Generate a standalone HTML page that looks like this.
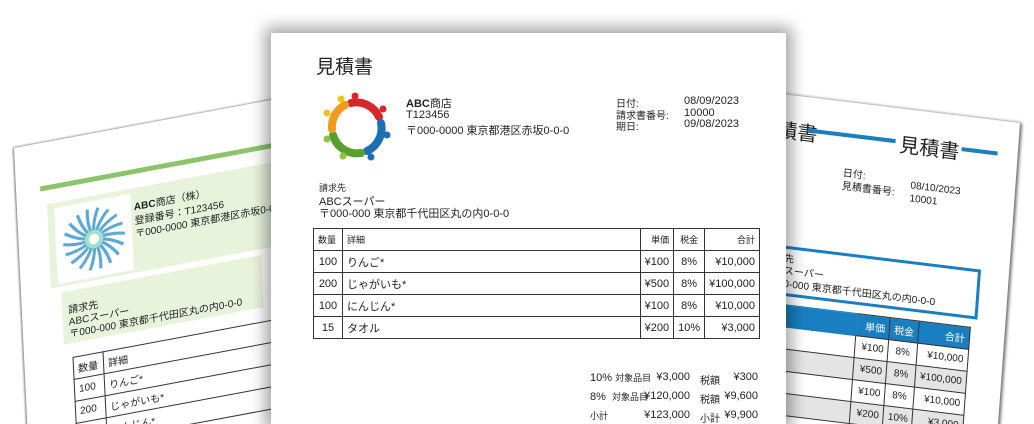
<!DOCTYPE html>
<html style="width:1034px;height:424px;overflow:hidden"><head><meta charset="utf-8"><style>
*{margin:0;padding:0;box-sizing:border-box}
html,body{overflow:hidden}
body{width:1034px;height:424px;overflow:hidden;background:#fff;font-family:"Liberation Sans","Noto Sans CJK JP",sans-serif;color:#222}
#wrap{position:relative;width:1034px;height:424px;overflow:hidden}
.abs{position:absolute}
.pg{position:absolute;background:#fff}
#left{left:14px;top:148px;width:330px;height:400px;transform-origin:0 0;transform:matrix(1,-0.187,0.048,1,0,0);box-shadow:-1px 0 2px #777,0 -1px 2px #ccc}
#right{left:720px;top:123px;width:300px;height:400px;transform-origin:300px 0;transform:matrix(1,0.122,-0.073,1,0,0);box-shadow:2px 0 3px #666}
#center{left:271px;top:33px;width:515px;height:391px;box-shadow:0 0 14px 6px rgba(0,0,0,.35)}
.t{font-size:11px;white-space:nowrap;position:absolute}
table{border-collapse:collapse;position:absolute;font-size:10px}
td{border:1px solid #333;height:22px;padding:0 4px;white-space:nowrap}
</style></head><body><div id="wrap">

<div class="pg" id="left">
  <div class="abs" style="left:24px;top:43px;width:320px;height:5px;background:#8cc46a"></div>
  <div class="abs" style="left:30px;top:62px;width:310px;height:84px;background:#e8f3dc"></div>
  <div class="abs" style="left:37px;top:67px;width:76px;height:76px;background:#fff">
    <svg width="76" height="76" viewBox="0 0 74 72"><g transform="translate(37,36)" fill="none" stroke-width="3">
    <g stroke="#5aa9d6">
    <path d="M3,0 Q14,-4 30,0"/><path d="M3,0 Q14,-4 30,0" transform="rotate(20)"/><path d="M3,0 Q14,-4 30,0" transform="rotate(40)"/><path d="M3,0 Q14,-4 30,0" transform="rotate(60)"/><path d="M3,0 Q14,-4 30,0" transform="rotate(80)"/><path d="M3,0 Q14,-4 30,0" transform="rotate(100)"/><path d="M3,0 Q14,-4 30,0" transform="rotate(120)"/><path d="M3,0 Q14,-4 30,0" transform="rotate(140)"/><path d="M3,0 Q14,-4 30,0" transform="rotate(160)"/><path d="M3,0 Q14,-4 30,0" transform="rotate(180)"/><path d="M3,0 Q14,-4 30,0" transform="rotate(200)"/><path d="M3,0 Q14,-4 30,0" transform="rotate(220)"/><path d="M3,0 Q14,-4 30,0" transform="rotate(240)"/><path d="M3,0 Q14,-4 30,0" transform="rotate(260)"/><path d="M3,0 Q14,-4 30,0" transform="rotate(280)"/><path d="M3,0 Q14,-4 30,0" transform="rotate(300)"/><path d="M3,0 Q14,-4 30,0" transform="rotate(320)"/><path d="M3,0 Q14,-4 30,0" transform="rotate(340)"/></g>
    <circle r="9" fill="#9fe0c8" stroke="none"/><circle r="5" fill="#fff" stroke="none"/></g></svg>
  </div>
  <div class="t" style="left:116px;top:72px;font-size:10px"><b>ABC</b>商店（株）</div>
  <div class="t" style="left:116px;top:86px;font-size:10px">登録番号：T123456</div>
  <div class="t" style="left:116px;top:99px;font-size:10px">〒000-0000 東京都港区赤坂0-0-0</div>
  <div class="abs" style="left:40px;top:152px;width:200px;height:52px;background:#e8f3dc"></div>
  <div class="t" style="left:46px;top:162px;font-size:10px">請求先</div>
  <div class="t" style="left:46px;top:174px;font-size:10px">ABCスーパー</div>
  <div class="t" style="left:46px;top:186px;font-size:10px">〒000-000 東京都千代田区丸の内0-0-0</div>
  <table style="left:48px;top:218px;width:290px">
   <tr><td style="width:30px;height:21px">数量</td><td>詳細</td></tr>
   <tr><td>100</td><td>りんご*</td></tr>
   <tr><td>200</td><td>じゃがいも*</td></tr>
   <tr><td>100</td><td>にんじん*</td></tr>
  </table>
</div>

<div class="pg" id="right">
  <div class="t" style="left:40px;top:20px;font-size:20px">見積書</div>
  <div class="abs" style="left:90px;top:31px;width:88px;height:4px;background:#1a7fc1"></div>
  <div class="t" style="left:182px;top:20px;font-size:20px">見積書</div>
  <div class="abs" style="left:244px;top:31px;width:36px;height:4px;background:#1a7fc1"></div>
  <div class="t" style="left:128px;top:62px;font-size:10px">日付:</div>
  <div class="t" style="left:128px;top:75px;font-size:10px">見積書番号:</div>
  <div class="t" style="left:196px;top:70px;font-size:10px">08/10/2023</div>
  <div class="t" style="left:196px;top:83px;font-size:10px">10001</div>
  <div class="abs" style="left:20px;top:150px;width:252px;height:50px;border:3px solid #1a7fc1"></div>
  <div class="t" style="left:56px;top:154px;font-size:10px">請求先</div>
  <div class="t" style="left:56px;top:166px;font-size:10px">ABCスーパー</div>
  <div class="t" style="left:56px;top:179px;font-size:10px">〒000-000 東京都千代田区丸の内0-0-0</div>
  <table style="left:40px;top:208px;width:226px">
   <tr style="background:#1a7fc1;color:#fff"><td style="border-color:#1a7fc1">&nbsp;</td><td style="width:33px;text-align:right">単価</td><td style="width:28px">税金</td><td style="width:50px;text-align:right">合計</td></tr>
   <tr><td></td><td style="text-align:right">¥100</td><td style="text-align:center">8%</td><td style="text-align:right">¥10,000</td></tr>
   <tr style="background:#e4e4e4"><td></td><td style="text-align:right">¥500</td><td style="text-align:center">8%</td><td style="text-align:right">¥100,000</td></tr>
   <tr><td></td><td style="text-align:right">¥100</td><td style="text-align:center">8%</td><td style="text-align:right">¥10,000</td></tr>
   <tr style="background:#e4e4e4"><td></td><td style="text-align:right">¥200</td><td style="text-align:center">10%</td><td style="text-align:right">¥3,000</td></tr>
  </table>
</div>

<div class="pg" id="center">
  <div class="t" style="left:45px;top:19px;font-size:19px">見積書</div>
  <svg class="abs" style="left:48px;top:58px" width="76" height="76" viewBox="0 0 76 76">
   <g transform="translate(38,36)" fill="none" stroke-width="8" stroke-linecap="round">
    <path d="M-6,-24 A25,25 0 0 1 22,-10" stroke="#d9262b"/>
    <path d="M24,-4 A25,25 0 0 1 10,24" stroke="#1d6fb3"/>
    <path d="M4,26 A25,25 0 0 1 -24,8" stroke="#5a9e2e"/>
    <path d="M-25,2 A25,25 0 0 1 -12,-22" stroke="#f29a1d"/>
   </g>
   <g transform="translate(38,36)">
    <circle cx="-2" cy="-31" r="3.5" fill="#d9262b"/><circle cx="26" cy="-18" r="3.5" fill="#d9262b"/>
    <circle cx="30" cy="8" r="3.5" fill="#1d6fb3"/><circle cx="14" cy="30" r="3.5" fill="#1d6fb3"/>
    <circle cx="-14" cy="29" r="3.5" fill="#8bc43f"/><circle cx="-30" cy="12" r="3.5" fill="#8bc43f"/>
    <circle cx="-30" cy="-14" r="3.5" fill="#f6c21a"/><circle cx="-16" cy="-28" r="3.5" fill="#f6c21a"/>
   </g>
  </svg>
  <div class="t" style="left:135px;top:62px;font-size:11px"><b>ABC</b>商店</div>
  <div class="t" style="left:135px;top:76px;font-size:11px">T123456</div>
  <div class="t" style="left:135px;top:89px;font-size:11px">〒000-0000 東京都港区赤坂0-0-0</div>
  <div class="t" style="left:345px;top:62px;font-size:10px">日付:</div>
  <div class="t" style="left:345px;top:74px;font-size:10px">請求書番号:</div>
  <div class="t" style="left:345px;top:85px;font-size:10px">期日:</div>
  <div class="t" style="left:413px;top:62px;font-size:11px">08/09/2023</div>
  <div class="t" style="left:413px;top:74px;font-size:11px">10000</div>
  <div class="t" style="left:413px;top:85px;font-size:11px">09/08/2023</div>
  <div class="t" style="left:48px;top:148px;font-size:9px">請求先</div>
  <div class="t" style="left:48px;top:160px;font-size:11px">ABCスーパー</div>
  <div class="t" style="left:48px;top:172px;font-size:11px">〒000-000 東京都千代田区丸の内0-0-0</div>
  <table style="left:42px;top:195px;width:447px;font-size:11px">
   <tr style="font-size:9px"><td style="width:29px;height:22px">数量</td><td>詳細</td><td style="width:33px;text-align:right">単価</td><td style="width:27px;text-align:center">税金</td><td style="width:53px;text-align:right">合計</td></tr>
   <tr><td style="text-align:center">100</td><td>りんご*</td><td style="text-align:right">¥100</td><td style="text-align:center">8%</td><td style="text-align:right">¥10,000</td></tr>
   <tr><td style="text-align:center">200</td><td>じゃがいも*</td><td style="text-align:right">¥500</td><td style="text-align:center">8%</td><td style="text-align:right">¥100,000</td></tr>
   <tr><td style="text-align:center">100</td><td>にんじん*</td><td style="text-align:right">¥100</td><td style="text-align:center">8%</td><td style="text-align:right">¥10,000</td></tr>
   <tr><td style="text-align:center">15</td><td>タオル</td><td style="text-align:right">¥200</td><td style="text-align:center">10%</td><td style="text-align:right">¥3,000</td></tr>
  </table>
  <div class="t" style="left:319px;top:338px;font-size:11px">10% <span style="font-size:9px">対象品目</span></div>
  <div class="t" style="left:319px;top:357px;font-size:11px">8% &nbsp;<span style="font-size:9px">対象品目</span></div>
  <div class="t" style="left:319px;top:376px;font-size:9px">小計</div>
  <div class="t" style="left:369px;top:338px;width:50px;text-align:right;font-size:11px">¥3,000</div>
  <div class="t" style="left:369px;top:357px;width:50px;text-align:right;font-size:11px">¥120,000</div>
  <div class="t" style="left:369px;top:376px;width:50px;text-align:right;font-size:11px">¥123,000</div>
  <div class="t" style="left:429px;top:339px;font-size:10px">税額</div>
  <div class="t" style="left:429px;top:358px;font-size:10px">税額</div>
  <div class="t" style="left:429px;top:377px;font-size:10px">小計</div>
  <div class="t" style="left:447px;top:338px;width:40px;text-align:right;font-size:11px">¥300</div>
  <div class="t" style="left:447px;top:357px;width:40px;text-align:right;font-size:11px">¥9,600</div>
  <div class="t" style="left:447px;top:376px;width:40px;text-align:right;font-size:11px">¥9,900</div>
</div>
</div></body></html>
